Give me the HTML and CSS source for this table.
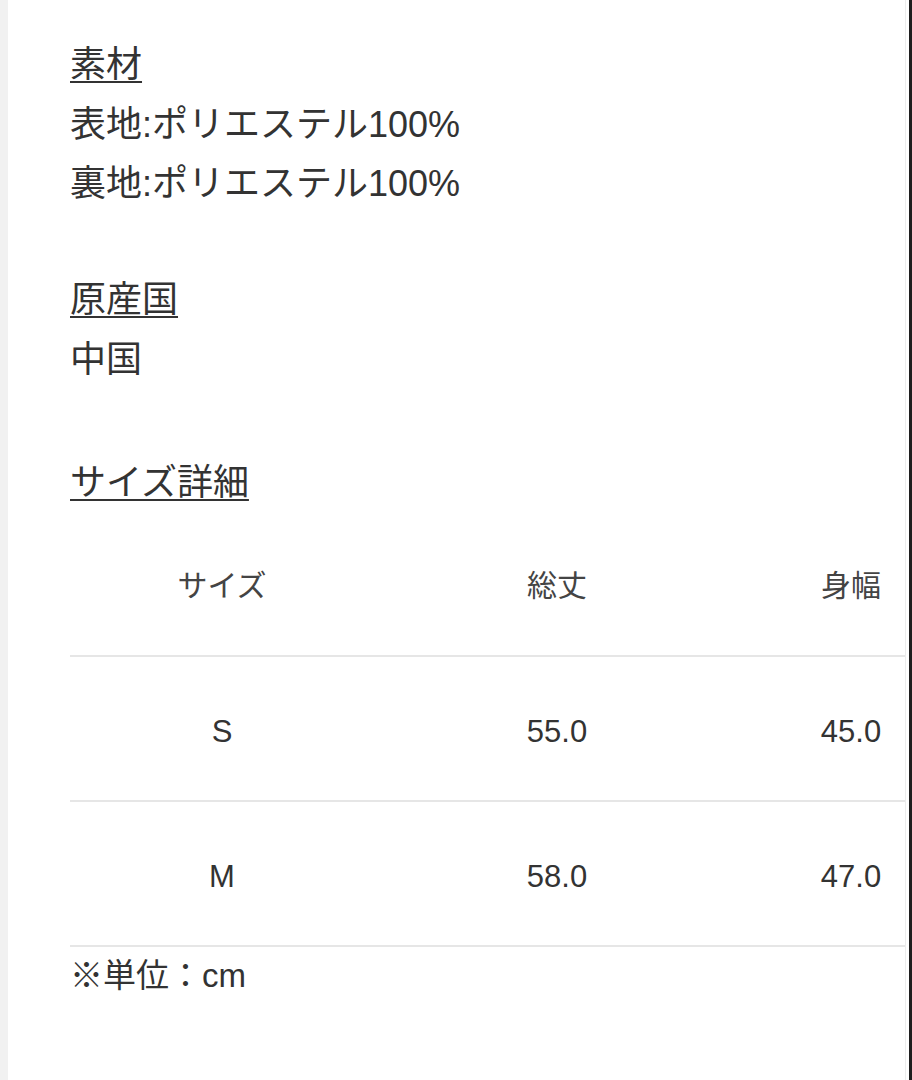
FILE: index.html
```html
<!DOCTYPE html>
<html lang="ja">
<head>
<meta charset="utf-8">
<link rel="stylesheet" href="styles.css">
</head>
<body>
<div class="page">
  <div class="edge-left"></div>
  <main class="content">
    <section class="block first">
      <h2 class="label">素材</h2>
      <p class="line">表地:ポリエステル100%</p>
      <p class="line">裏地:ポリエステル100%</p>
    </section>
    <section class="block">
      <h2 class="label">原産国</h2>
      <p class="line">中国</p>
    </section>
    <section class="block sizes">
      <h2 class="label">サイズ詳細</h2>
      <div class="table">
        <div class="row head">
          <div class="cell">サイズ</div>
          <div class="cell">総丈</div>
          <div class="cell">身幅</div>
        </div>
        <div class="row">
          <div class="cell">S</div>
          <div class="cell">55.0</div>
          <div class="cell">45.0</div>
        </div>
        <div class="row">
          <div class="cell">M</div>
          <div class="cell">58.0</div>
          <div class="cell">47.0</div>
        </div>
      </div>
      <p class="note">※単位：cm</p>
    </section>
  </main>
  <div class="edge-right"><div class="edge-line"></div><div class="edge-gap"></div><div class="edge-dark"></div></div>
</div>
</body>
</html>
```
FILE: styles.css
```css
html, body {
  margin: 0;
  padding: 0;
  background: #ffffff;
}
.page {
  display: flex;
  width: 912px;
  height: 1080px;
  overflow: hidden;
  font-family: "Liberation Sans", "Noto Sans CJK JP", sans-serif;
  color: #333333;
}
.edge-left {
  width: 8px;
  flex: none;
  background: #f1f1f1;
}
.content {
  flex: 1;
  min-width: 0;
  overflow: hidden;
  padding: 35px 0 0 62px;
  background: #ffffff;
}
.edge-right {
  display: flex;
  flex: none;
}
.edge-line { width: 1px; background: #ececec; }
.edge-gap { width: 3px; background: #ffffff; }
.edge-dark { width: 3px; background: #1e1e1e; }

.block { margin: 0 0 57px 0; }
.block.sizes { margin-top: 64px; }
.label {
  margin: 0;
  font-size: 36px;
  font-weight: normal;
  line-height: 60px;
  text-decoration: underline;
  text-decoration-thickness: 2px;
  text-underline-offset: 4px;
}
.line {
  margin: 0;
  font-size: 36px;
  line-height: 59px;
}
.table {
  width: 892px;
}
.row {
  display: grid;
  grid-template-columns: 304px 366px 222px;
  height: 143px;
  align-items: center;
  border-bottom: 2px solid #e6e6e6;
  font-size: 31px;
}
.row.head { height: 142px; }
.cell {
  text-align: center;
}
.row.head .cell {
  color: #444444;
  font-size: 30px;
  padding-top: 0;
  padding-bottom: 2px;
}
.row .cell { padding-top: 6px; }
.note {
  margin: 0;
  font-size: 33px;
  line-height: 58px;
}
```
